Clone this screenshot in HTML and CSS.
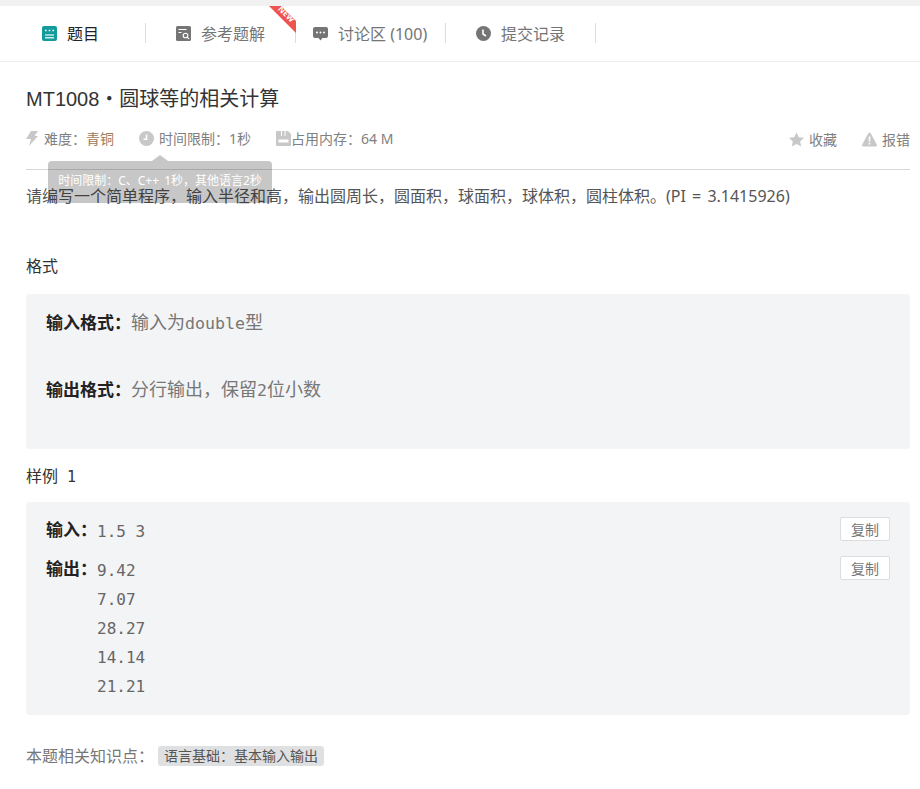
FILE: index.html
```html
<!DOCTYPE html>
<html lang="zh">
<head>
<meta charset="utf-8">
<title>MT1008</title>
<link rel="stylesheet" href="styles.css">
</head>
<body>
<nav class="tabs">
  <a class="tab tab-first tab-active">
    <svg class="tab-icon" viewBox="0 0 15 15"><rect width="15" height="15" rx="2" fill="#139a9b"/><path d="M3 9h9" stroke="#8fd3d3" stroke-width="2"/><path d="M3 11.800h9" stroke="#fff" stroke-width="1.200"/><path d="M3 4.500h1.600M6.700 4.500h1.600M10.400 4.500h1.600" stroke="#fff" stroke-width="1.600"/></svg>
    <span>题目</span>
  </a>
  <a class="tab tab-second">
    <svg class="tab-icon" viewBox="0 0 15 15"><rect width="15" height="15" rx="1.500" fill="#757575"/><path d="M2.500 3.500h8M2.500 6.500h3" stroke="#fff" stroke-width="1"/><circle cx="9.500" cy="9.500" r="2.300" fill="none" stroke="#fff" stroke-width="1.100"/><path d="M11.200 11.200l2 2" stroke="#fff" stroke-width="1.100"/></svg>
    <span>参考题解</span>
    <span class="ribbon"><span class="ribbon-text">NEW</span></span>
  </a>
  <a class="tab tab-third">
    <svg class="tab-icon" viewBox="0 0 15 15"><path d="M2 1h11a2 2 0 0 1 2 2v7a2 2 0 0 1-2 2H9.500L7.500 14.500 5.500 12H2a2 2 0 0 1-2-2V3a2 2 0 0 1 2-2z" fill="#757575"/><circle cx="4" cy="6.500" r="1" fill="#fff"/><circle cx="7.500" cy="6.500" r="1" fill="#fff"/><circle cx="11" cy="6.500" r="1" fill="#fff"/></svg>
    <span>讨论区 (100)</span>
  </a>
  <a class="tab tab-fourth">
    <svg class="tab-icon" viewBox="0 0 15 15"><circle cx="7.500" cy="7.500" r="7.500" fill="#757575"/><path d="M7 3.500v4.500l3 2" fill="none" stroke="#fff" stroke-width="1.600"/></svg>
    <span>提交记录</span>
  </a>
</nav>

<main class="page">
  <h1 class="title">MT1008・圆球等的相关计算</h1>
  <div class="meta">
    <div class="meta-left">
      <span class="meta-item meta-level">
        <svg class="meta-icon bolt" viewBox="0 0 12 15"><path d="M5 0h7L8.500 5H12L3 15l2-7H0z" fill="#c8c8c8"/></svg>
        <span>难度：<span class="bronze">青铜</span></span>
      </span>
      <span class="meta-item meta-time">
        <svg class="meta-icon" viewBox="0 0 15 15"><circle cx="7.500" cy="7.500" r="7.500" fill="#c8c8c8"/><path d="M7.500 3.500v4.800H4.500" fill="none" stroke="#fff" stroke-width="1.600"/></svg>
        <span>时间限制：1秒</span>
      </span>
      <span class="meta-item meta-mem">
        <svg class="meta-icon mem" viewBox="0 0 15 15"><path d="M1 0h11l3 3v11a1 1 0 0 1-1 1H1a1 1 0 0 1-1-1V1a1 1 0 0 1 1-1z" fill="#c8c8c8"/><path d="M5.500 0v5M9 0v5" stroke="#fff" stroke-width="1"/><rect x="2.500" y="8.500" width="10" height="3" fill="#fff"/></svg>
        <span>占用内存：64 M</span>
      </span>
    </div>
    <div class="meta-right">
      <span class="meta-item">
        <svg class="meta-icon" viewBox="0 0 16 15"><path d="M8 0l2.400 5 5.600.700-4.100 3.800 1.100 5.500-5-2.800-5 2.800 1.100-5.500L0 5.700 5.600 5z" fill="#c8c8c8"/></svg>
        <span>收藏</span>
      </span>
      <span class="meta-item">
        <svg class="meta-icon" viewBox="0 0 15 14"><path d="M7.500 0a1.200 1.200 0 0 1 1 .6l6.300 11.500a1.200 1.200 0 0 1-1 1.900H1.200a1.200 1.200 0 0 1-1-1.900L6.500.6a1.200 1.200 0 0 1 1-.6z" fill="#c8c8c8"/><path d="M7.500 4v5M7.500 10.200v1.800" stroke="#fff" stroke-width="1.600"/></svg>
        <span>报错</span>
      </span>
    </div>
  </div>
  <p class="desc">请编写一个简单程序，输入半径和高，输出圆周长，圆面积，球面积，球体积，圆柱体积。(PI = 3.1415926)</p>

  <h2 class="section section-format">格式</h2>
  <section class="panel panel-format">
    <p class="format-row"><b class="format-label">输入格式：</b><span class="format-value">输入为<span class="format-mono">double</span>型</span></p>
    <p class="format-row format-row-2"><b class="format-label">输出格式：</b><span class="format-value">分行输出，保留<span class="format-mono">2</span>位小数</span></p>
  </section>

  <h2 class="section section-sample">样例<span class="sample-no">1</span></h2>
  <section class="panel panel-sample">
    <div class="io-row">
      <b class="io-label">输入：</b>
      <pre class="io-data">1.5 3</pre>
      <button class="copy">复制</button>
    </div>
    <div class="io-row io-row-out">
      <b class="io-label">输出：</b>
      <pre class="io-data">9.42
7.07
28.27
14.14
21.21</pre>
      <button class="copy">复制</button>
    </div>
  </section>

  <div class="tags">
    <span>本题相关知识点：</span>
    <span class="tag">语言基础：基本输入输出</span>
  </div>
</main>

<div class="tooltip">时间限制：C、C++ 1秒，其他语言2秒</div>
</body>
</html>
```
FILE: styles.css
```css
* { box-sizing: border-box; }
html, body { margin: 0; padding: 0; }
body {
  width: 920px;
  height: 789px;
  overflow: hidden;
  position: relative;
  background: #fff;
  border-top: 6px solid #f1f1f1;
  font-family: "Noto Sans", "Noto Sans CJK SC", sans-serif;
  color: #555;
}
.tabs {
  display: flex;
  align-items: center;
  height: 56px;
  border-bottom: 1px solid #eee;
  padding-bottom: 1px;
}
.tab {
  position: relative;
  display: flex;
  align-items: center;
  height: 20px;
  font-size: 16px;
  color: #757575;
  border-right: 1px solid #ddd;
}
.tab-icon { width: 15px; height: 15px; margin-right: 10px; flex: none; }
.tab-first { width: 146px; padding-left: 42px; }
.tab-active { color: #222; }
.tab-second { width: 150px; padding-left: 30px; }
.tab-third { width: 150px; padding-left: 17px; }
.tab-fourth { width: 150px; padding-left: 30px; }
.ribbon {
  position: absolute;
  right: -1px;
  top: -18px;
  width: 28px;
  height: 28px;
  background: #ef5350;
  clip-path: polygon(0 0, 12px 0, 100% 16px, 100% 100%);
}
.ribbon-text {
  position: absolute;
  left: 9px;
  top: 4px;
  font-size: 8px;
  font-weight: 700;
  line-height: 10px;
  color: #fff;
  transform: rotate(45deg);
}
.page { padding: 0 10px 0 26px; }
.title {
  margin: 22px 0 0;
  font-family: "Liberation Sans", "Noto Sans CJK SC", sans-serif;
  font-size: 20px;
  line-height: 30px;
  font-weight: 400;
  color: #333;
}
.meta {
  display: flex;
  justify-content: space-between;
  align-items: flex-start;
  margin-top: 10px;
  height: 46px;
  padding-top: 4px;
  font-size: 14px;
  color: #808080;
  border-bottom: 1px solid #d8d8d8;
}
.meta-left, .meta-right { display: flex; align-items: center; height: 20px; }
.meta-right { margin-top: 1px; }
.meta-item { display: flex; align-items: center; white-space: nowrap; }
.meta-icon { width: 15px; height: 15px; margin-right: 5px; flex: none; }
.bolt { width: 12px; margin-right: 6px; }
.mem { margin-right: 0; }
.bronze { color: #9c7a5c; }
.meta-time { margin-left: 25px; }
.meta-mem { margin-left: 25px; }
.meta-right .meta-item + .meta-item { margin-left: 25px; }
.desc {
  margin: 14px 0 0;
  font-size: 16px;
  line-height: 24px;
  word-spacing: 2px;
  color: #555;
}
.section {
  margin: 0;
  font-size: 16px;
  font-weight: 400;
  line-height: 24px;
  color: #333;
}
.section-format { margin-top: 46px; }
.section-sample { margin-top: 15px; }
.sample-no { font-family: "DejaVu Sans Mono", monospace; font-size: 15px; margin-left: 9px; }
.panel { background: #f3f4f6; border-radius: 4px; }
.panel-format { height: 155px; margin-top: 16px; padding: 16px 20px; }
.format-row { margin: 0; line-height: 24px; display: flex; align-items: baseline; }
.format-row-2 { margin-top: 41px; }
.format-label { font-size: 17px; font-weight: 700; color: #222; }
.format-value { font-size: 18px; color: #777; }
.format-mono { font-family: "DejaVu Sans Mono", monospace; font-size: 16.600px; }
.panel-sample { height: 213px; margin-top: 13px; padding: 15px 20px 0; }
.io-row { display: flex; align-items: flex-start; }
.io-row-out { margin-top: 10px; }
.io-label { font-size: 17px; line-height: 26px; color: #222; width: 51px; flex: none; }
.io-data {
  margin: 0;
  flex: 1;
  font-family: "DejaVu Sans Mono", monospace;
  font-size: 16px;
  line-height: 29px;
  color: #666;
}
.copy {
  width: 50px;
  height: 24px;
  padding: 0;
  background: #fff;
  border: 1px solid #ddd;
  border-radius: 2px;
  font-family: inherit;
  font-size: 14px;
  color: #777;
}
.tags { display: flex; align-items: center; margin-top: 29px; font-size: 16px; color: #777; line-height: 24px; }
.tag {
  margin-left: 4px;
  padding: 0 6px;
  height: 20px;
  line-height: 20px;
  font-size: 14px;
  background: #dfe0e2;
  border-radius: 3px;
  color: #555;
}
.tooltip {
  position: absolute;
  left: 48px;
  top: 155px;
  width: 224px;
  height: 42px;
  padding-top: 10px;
  background: rgba(0, 0, 0, .22);
  border-radius: 4px;
  font-size: 12px;
  line-height: 20px;
  word-spacing: 2px;
  text-align: center;
  color: #fff;
}
.tooltip::before {
  content: "";
  position: absolute;
  left: 104px;
  top: -6px;
  border-left: 8px solid transparent;
  border-right: 8px solid transparent;
  border-bottom: 6px solid rgba(0, 0, 0, .22);
}
```
